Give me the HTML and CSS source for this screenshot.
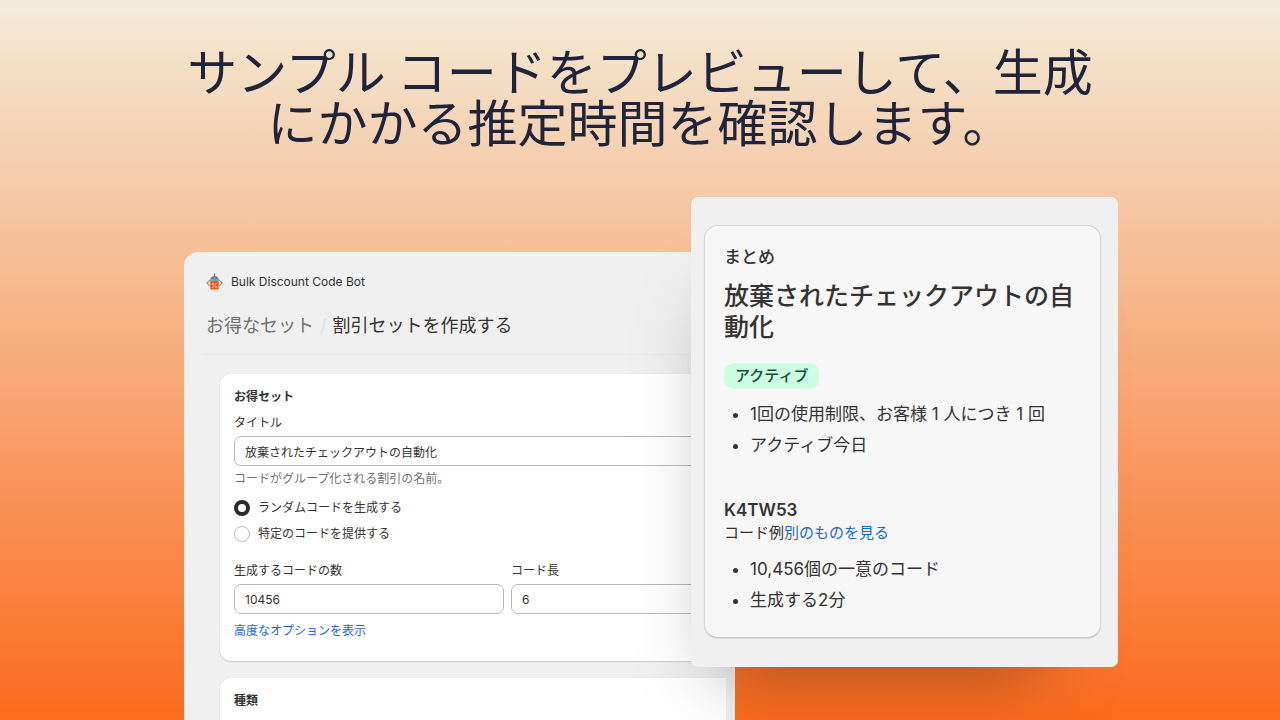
FILE: index.html
```html
<!DOCTYPE html>
<html lang="ja">
<head>
<meta charset="utf-8">
<title>Bulk Discount Code Bot</title>
<link rel="stylesheet" href="styles.css">
</head>
<body>
<main class="page">
  <h1 class="headline">サンプル コードをプレビューして、生成<br>にかかる推定時間を確認します。</h1>
  <div class="stage">
    <section class="app">
      <header class="app-header">
        <div class="brand">
          <svg class="brand-icon" viewBox="0 0 17 18" aria-hidden="true">
            <path d="M8.500 0.300V4" stroke="#8592a0" stroke-width="1.300"/>
            <path d="M4.400 6.800C4.400 4.400 6 3.100 8.500 3.100s4.100 1.300 4.100 3.700z" fill="#728293"/>
            <path d="M4 7.200L0.900 9.800l2.800 3.400M13 7.200l3.100 2.600-2.800 3.400" fill="none" stroke="#8d9cab" stroke-width="1.300"/>
            <rect x="3.200" y="6.400" width="10.600" height="1.700" rx=".5" fill="#8b9baa"/>
            <rect x="4.300" y="8.100" width="8.400" height="8.300" rx=".6" fill="#ff560f"/>
            <path d="M10.400 10l-3.800 4.800" stroke="#ffe4d8" stroke-width=".9"/>
            <circle cx="6.900" cy="10.800" r=".9" fill="#ffd9c8"/>
            <circle cx="10.200" cy="14" r=".9" fill="#ffd9c8"/>
          </svg>
          <span>Bulk Discount Code Bot</span>
        </div>
        <nav class="crumbs"><a class="crumb-link" href="#">お得なセット</a><span class="crumb-sep">/</span><span>割引セットを作成する</span></nav>
      </header>
      <form class="cards">
        <div class="card">
          <h2 class="card-title">お得セット</h2>
          <label class="label" for="title">タイトル</label>
          <input class="input" id="title" type="text" value="放棄されたチェックアウトの自動化">
          <p class="help">コードがグループ化される割引の名前。</p>
          <label class="choice"><input class="radio" type="radio" name="mode" checked><span>ランダムコードを生成する</span></label>
          <label class="choice"><input class="radio" type="radio" name="mode"><span>特定のコードを提供する</span></label>
          <div class="fields">
            <div class="field">
              <label class="label" for="count">生成するコードの数</label>
              <input class="input" id="count" type="text" value="10456">
            </div>
            <div class="field">
              <label class="label" for="length">コード長</label>
              <input class="input" id="length" type="text" value="6">
            </div>
          </div>
          <a class="link more" href="#">高度なオプションを表示</a>
        </div>
        <div class="card">
          <h2 class="card-title">種類</h2>
        </div>
      </form>
    </section>
    <aside class="preview">
      <div class="summary">
        <h2 class="summary-label">まとめ</h2>
        <h3 class="summary-title">放棄されたチェックアウトの自動化</h3>
        <span class="badge">アクティブ</span>
        <ul class="facts">
          <li>1回の使用制限、お客様 1 人につき 1 回</li>
          <li>アクティブ今日</li>
        </ul>
        <div class="code">K4TW53</div>
        <p class="example">コード例<a class="link" href="#">別のものを見る</a></p>
        <ul class="facts">
          <li>10,456個の一意のコード</li>
          <li>生成する2分</li>
        </ul>
      </div>
    </aside>
  </div>
</main>
</body>
</html>
```
FILE: styles.css
```css
* { box-sizing: border-box; }
body {
  margin: 0;
  font-family: Inter, "Noto Sans CJK JP", sans-serif;
  font-size: 12px;
  line-height: 16px;
  color: #333;
}
h1, h2, h3, p, ul { margin: 0; padding: 0; }
a { text-decoration: none; }
.page {
  display: flex;
  flex-direction: column;
  height: 100vh;
  overflow: hidden;
  padding: 44px 162px 0 184px;
  background: linear-gradient(#f3ecda 0%, #f4e2c9 7%, #f5cfb0 22%, #f6bf98 35%, #fc6a1d 100%);
}
.headline {
  margin-right: 22px;
  margin-bottom: 51px;
  font-family: "Noto Sans CJK JP", sans-serif;
  font-size: 50px;
  line-height: 51px;
  font-weight: 400;
  text-align: center;
  white-space: nowrap;
  color: #20243a;
}
.stage { display: flex; flex: 1; align-items: flex-start; }
.app {
  flex: none;
  width: 59%;
  align-self: stretch;
  margin-top: 55px;
  padding: 21px 9px 0 19px;
  background: #f0f0f0;
  border-radius: 14px 14px 0 0;
  overflow: hidden;
}
.app-header {
  margin-right: -9px;
  padding: 0 3px 16px;
  border-bottom: 1px solid #e9e9e9;
}
.brand { display: flex; align-items: center; gap: 8px; margin-bottom: 23px; }
.brand-icon { width: 17px; height: 18px; }
.crumbs { display: flex; font-size: 18px; line-height: 24px; }
.crumb-link { color: #707070; }
.crumb-sep { padding: 0 6px; color: #e2e2e2; }
.cards {
  display: flex;
  flex-direction: column;
  gap: 17px;
  padding: 19px 0 0 17px;
  overflow: hidden;
}
.card {
  margin-right: -69px;
  padding: 15px 14px 13px;
  background: #fff;
  border-radius: 11px;
  box-shadow: 0 1px 1px #ccc, 0 0 1px #ccc;
}
.card-title { margin-bottom: 10px; font-size: 12px; line-height: 16px; font-weight: 700; }
.label { display: block; margin-bottom: 5px; }
.input {
  display: block;
  width: 100%;
  height: 30px;
  padding: 0 10px;
  border: 1px solid #b9b9b9;
  border-radius: 7px;
  background: #fff;
  font: inherit;
  color: inherit;
}
.help { margin: 5px 0 12px; color: #707070; }
.choice { display: flex; align-items: center; gap: 8px; height: 18px; margin-bottom: 8px; }
.radio {
  appearance: none;
  width: 16px;
  height: 16px;
  margin: 0;
  border: 1px solid #bdbdbd;
  border-radius: 50%;
  background: #fff;
}
.radio:checked { border: 4px solid #2b2b2b; }
.fields { display: flex; gap: 7px; margin-top: 20px; }
.field { flex: 1; }
.link { color: #1a66dc; }
.more { display: block; margin: 9px 0; }
.preview {
  flex: 1;
  z-index: 1;
  margin-left: -44px;
  padding: 28px 17px 29px 13px;
  background: #f0f0f0;
  border-radius: 7px;
  box-shadow: -24px 56px 72px -50px rgba(0, 0, 0, .34);
}
.summary {
  padding: 19px 13px 21px 19px;
  border: 1px solid #d6d6d6;
  border-bottom-color: #c6c6c6;
  border-radius: 14px;
  background: #f7f7f7;
  box-shadow: 0 1px 1px #d8d8d8;
}
.summary-label { margin-bottom: 12px; font-size: 17px; line-height: 24px; font-weight: 500; }
.summary-title { margin-bottom: 20px; font-size: 25px; line-height: 31px; font-weight: 500; }
.badge {
  display: inline-block;
  margin-bottom: 10px;
  padding: 0 11px;
  border-radius: 9px;
  background: #cdfee1;
  color: #0c5132;
  font-size: 15px;
  line-height: 26px;
  font-weight: 500;
}
.facts { padding-left: 26px; font-size: 17px; line-height: 31px; }
.code { margin-top: 37px; font-size: 17px; line-height: 24px; font-weight: 600; }
.example { margin-bottom: 10px; font-size: 15px; line-height: 22px; }
```
